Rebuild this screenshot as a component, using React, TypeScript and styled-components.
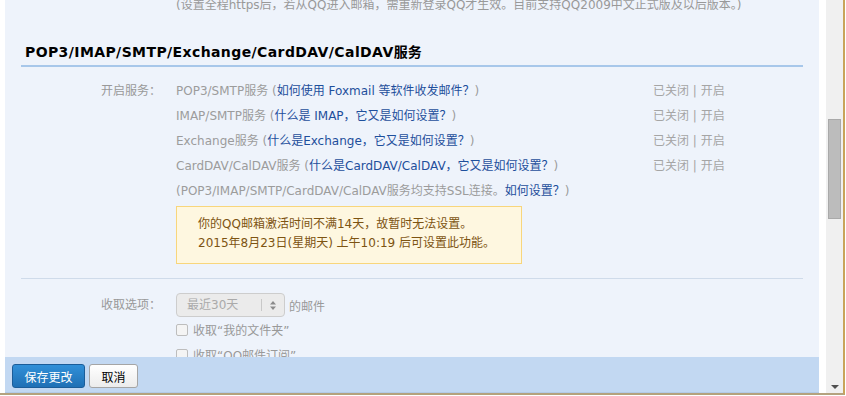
import styled, { createGlobalStyle } from "styled-components";

const GlobalStyle = createGlobalStyle`
  html, body {
    margin: 0;
    padding: 0;
    background: #fff;
  }
  body {
    font-family: "DejaVu Sans", "Noto Sans CJK SC", sans-serif;
    font-size: 12px;
  }
`;

const Window = styled.div`
  width: 843px;
  height: 393px;
  display: flex;
  border-right: 2px solid #c8a45a;
  border-bottom: 2px solid #b4a27e;
`;

const LeftGap = styled.div`
  width: 5px;
  background: #fff;
`;

const Panel = styled.div`
  width: 814px;
  display: flex;
  flex-direction: column;
  background: #eef3fb;
`;

const Content = styled.div`
  flex: 1;
  overflow: hidden;
  padding: 0 16px;
`;

const TopNote = styled.div`
  height: 11px;
  line-height: 11px;
  padding-left: 155px;
  color: #999;
  white-space: nowrap;
`;

const Title = styled.h3`
  margin: 30px 0 0;
  padding: 0 0 4px 4px;
  height: 20px;
  line-height: 20px;
  font-family: "DejaVu Sans", Verdana, sans-serif;
  font-size: 14px;
  font-weight: bold;
  letter-spacing: 0.4px;
  color: #000;
  span {
    font-family: "Noto Sans CJK SC", sans-serif;
    letter-spacing: 0;
  }
  border-bottom: 2px solid #a7c7ea;
`;

const Section = styled.div<{ $top: number }>`
  display: flex;
  margin-top: ${(p) => p.$top}px;
`;

const Label = styled.div<{ $lh: number }>`
  width: 140px;
  padding-right: 15px;
  text-align: right;
  color: #999;
  line-height: ${(p) => p.$lh}px;
  flex-shrink: 0;
`;

const Items = styled.div`
  flex: 1;
`;

const Row = styled.div`
  display: flex;
  height: 25px;
  line-height: 25px;
  white-space: nowrap;
`;

const Service = styled.div`
  flex: 1;
  color: #9c9c9c;
`;

const Link = styled.a`
  color: #1e4f9c;
  text-decoration: none;
`;

const Status = styled.div`
  width: 150px;
  color: #a5a5a5;
`;

const Notice = styled.div`
  width: 302px;
  margin-top: 2px;
  padding: 8px 21px 10px;
  line-height: 19px;
  background: #fef7e0;
  border: 1px solid #f8d67c;
  color: #7d5412;
  white-space: nowrap;
`;

const Divider = styled.div`
  height: 1px;
  margin-top: 14px;
  background: #cfdbea;
`;

const FieldRow = styled.div`
  display: flex;
  align-items: center;
  height: 24px;
  color: #999;
`;

const Select = styled.div`
  width: 107px;
  height: 22px;
  display: flex;
  align-items: center;
  border: 1px solid #cdcdcd;
  border-radius: 4px;
  background: #ebebeb;
  color: #aaa;
  margin-right: 4px;
`;

const SelectText = styled.div`
  flex: 1;
  padding-left: 10px;
  line-height: 22px;
`;

const SelectArrow = styled.div`
  width: 22px;
  height: 12px;
  display: flex;
  align-items: center;
  justify-content: center;
  border-left: 1px solid #c8c8c8;
`;

const CheckRow = styled.div`
  display: flex;
  align-items: center;
  height: 25px;
  color: #999;
  white-space: nowrap;
`;

const CheckBox = styled.span`
  width: 10px;
  height: 10px;
  margin-right: 5px;
  border: 1px solid #bdbdbd;
  border-radius: 2px;
  background: #f4f4f4;
`;

const Footer = styled.div`
  height: 36px;
  display: flex;
  align-items: flex-start;
  gap: 4px;
  padding: 7px 0 0 7px;
  box-sizing: border-box;
  background: #c2d8f2;
  border-bottom: 1px solid #b3cbe8;
`;

const Button = styled.button<{ $primary?: boolean }>`
  height: 24px;
  padding: 0;
  font-family: "Noto Sans CJK SC", sans-serif;
  font-size: 12px;
  border-radius: 3px;
  cursor: pointer;
  width: ${(p) => (p.$primary ? 73 : 49)}px;
  color: ${(p) => (p.$primary ? "#fff" : "#000")};
  border: 1px solid ${(p) => (p.$primary ? "#1b5d99" : "#a5a5a5")};
  background: ${(p) =>
    p.$primary
      ? "linear-gradient(#3190d8, #1f70b5)"
      : "linear-gradient(#fff, #ececec)"};
`;

const WhiteGap = styled.div`
  width: 7px;
  background: #fff;
`;

const Scrollbar = styled.div`
  width: 17px;
  background: #f0f0f0;
  display: flex;
  flex-direction: column;
  align-items: center;
`;

const Thumb = styled.div`
  width: 11px;
  height: 98px;
  margin-top: 119px;
  background: #bcbcbc;
  border: 1px solid #a9a9a9;
`;

const ArrowDown = styled.div`
  margin-top: auto;
  margin-bottom: 4px;
  line-height: 0;
`;

const services = [
  { name: "POP3/SMTP服务", help: "如何使用 Foxmail 等软件收发邮件？" },
  { name: "IMAP/SMTP服务", help: "什么是 IMAP，它又是如何设置？" },
  { name: "Exchange服务", help: "什么是Exchange，它又是如何设置？" },
  { name: "CardDAV/CalDAV服务", help: "什么是CardDAV/CalDAV，它又是如何设置？" },
];

export default function App() {
  return (
    <>
      <GlobalStyle />
      <Window>
        <LeftGap />
        <Panel>
          <Content>
            <TopNote>
              (设置全程https后，若从QQ进入邮箱，需重新登录QQ才生效。目前支持QQ2009中文正式版及以后版本。)
            </TopNote>
            <Title>
              POP3/IMAP/SMTP/Exchange/CardDAV/CalDAV<span>服务</span>
            </Title>
            <Section $top={12}>
              <Label $lh={25}>开启服务：</Label>
              <Items>
                {services.map((s) => (
                  <Row key={s.name}>
                    <Service>
                      {s.name} (<Link href="#">{s.help}</Link>)
                    </Service>
                    <Status>已关闭 | 开启</Status>
                  </Row>
                ))}
                <Row>
                  <Service>
                    (POP3/IMAP/SMTP/CardDAV/CalDAV服务均支持SSL连接。
                    <Link href="#">如何设置？</Link>)
                  </Service>
                </Row>
                <Notice>
                  你的QQ邮箱激活时间不满14天，故暂时无法设置。
                  <br />
                  2015年8月23日(星期天) 上午10:19 后可设置此功能。
                </Notice>
              </Items>
            </Section>
            <Divider />
            <Section $top={14}>
              <Label $lh={24}>收取选项：</Label>
              <Items>
                <FieldRow>
                  <Select>
                    <SelectText>最近30天</SelectText>
                    <SelectArrow>
                      <svg width="6" height="9" viewBox="0 0 6 9">
                        <path d="M3 0 L6 3.5 H0 Z M0 5.5 H6 L3 9 Z" fill="#8a8a8a" />
                      </svg>
                    </SelectArrow>
                  </Select>
                  的邮件
                </FieldRow>
                <CheckRow>
                  <CheckBox />
                  收取“我的文件夹”
                </CheckRow>
                <CheckRow>
                  <CheckBox />
                  收取“QQ邮件订阅”
                </CheckRow>
              </Items>
            </Section>
          </Content>
          <Footer>
            <Button $primary>保存更改</Button>
            <Button>取消</Button>
          </Footer>
        </Panel>
        <WhiteGap />
        <Scrollbar>
          <Thumb />
          <ArrowDown>
            <svg width="8" height="4" viewBox="0 0 8 4">
              <path d="M0 0 H8 L4 4 Z" fill="#505050" />
            </svg>
          </ArrowDown>
        </Scrollbar>
      </Window>
    </>
  );
}
